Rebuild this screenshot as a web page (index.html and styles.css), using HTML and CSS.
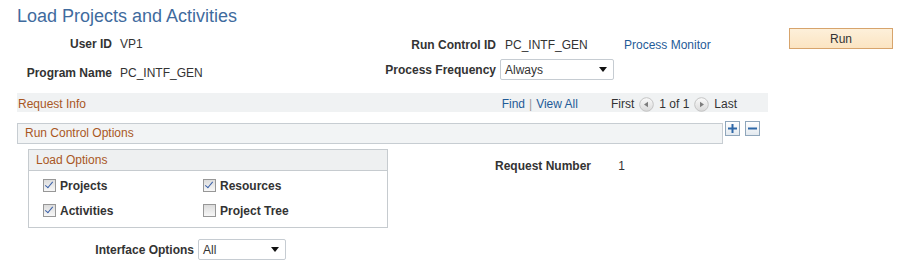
FILE: index.html
```html
<!DOCTYPE html>
<html>
<head>
    <title>Load Projects and Activities</title>
    <link rel="stylesheet" href="styles.css">
</head>
<body>
    <div class="page">
        <h1 class="page-title">Load Projects and Activities</h1>

        <div class="top">
            <div class="fields-left">
                <div class="left-row">
                    <span class="label label-left">User ID</span>
                    <span class="value">VP1</span>
                </div>
                <div class="left-row">
                    <span class="label label-left">Program Name</span>
                    <span class="value">PC_INTF_GEN</span>
                </div>
            </div>

            <div class="fields-right">
                <div class="right-row">
                    <span class="label label-right">Run Control ID</span>
                    <span class="value rc-value">PC_INTF_GEN</span>
                    <a class="link" href="#">Process Monitor</a>
                </div>
                <div class="right-row">
                    <span class="label label-right">Process Frequency</span>
                    <div class="select freq-select">
                        <span>Always</span>
                        <svg class="select-arrow" width="8" height="5" viewBox="0 0 8 5"><path d="M0 0 H8 L4 5 Z" fill="#111"/></svg>
                    </div>
                </div>
            </div>

            <button class="run-btn">Run</button>
        </div>

        <!-- scroll area header -->
        <div class="request-bar">
            <span class="section-title">Request Info</span>
            <div class="nav">
                <a class="link" href="#">Find</a>
                <span class="sep">|</span>
                <a class="link" href="#">View All</a>
                <span class="nav-first">First</span>
                <svg class="nav-icon" width="15" height="15" viewBox="0 0 15 15">
                    <defs>
                        <linearGradient id="navGrad" x1="0" y1="0" x2="0" y2="1">
                            <stop offset="0" stop-color="#fbfbfb"/>
                            <stop offset="1" stop-color="#d9d9d9"/>
                        </linearGradient>
                    </defs>
                    <circle cx="7.5" cy="7.5" r="6.8" fill="url(#navGrad)" stroke="#c4c4c4"/>
                    <path d="M5 7.5 L9 4.8 V10.2 Z" fill="#7d7d7d"/>
                </svg>
                <span class="nav-count">1 of 1</span>
                <svg class="nav-icon" width="15" height="15" viewBox="0 0 15 15">
                    <circle cx="7.5" cy="7.5" r="6.8" fill="url(#navGrad)" stroke="#c4c4c4"/>
                    <path d="M10 7.5 L6 4.8 V10.2 Z" fill="#7d7d7d"/>
                </svg>
                <span class="nav-last">Last</span>
            </div>
        </div>

        <div class="rco-row">
            <div class="rco-box"><span class="section-title">Run Control Options</span></div>
            <span class="row-btn">
                <svg width="9" height="9" viewBox="0 0 9 9"><path d="M3.5 0 H5.5 V3.5 H9 V5.5 H5.5 V9 H3.5 V5.5 H0 V3.5 H3.5 Z" fill="#2f68a8"/></svg>
            </span>
            <span class="row-btn row-btn-minus">
                <svg width="9" height="9" viewBox="0 0 9 9"><path d="M0 3.5 H9 V5.5 H0 Z" fill="#2f68a8"/></svg>
            </span>
        </div>

        <div class="load-row">
            <div class="load-group">
                <div class="group-header"><span class="section-title">Load Options</span></div>
                <div class="load-body">
                    <label class="check"><span class="box checked"></span>Projects</label>
                    <label class="check"><span class="box checked"></span>Resources</label>
                    <label class="check"><span class="box checked"></span>Activities</label>
                    <label class="check"><span class="box"></span>Project Tree</label>
                </div>
            </div>
            <div class="request-number">
                <span class="label rn-label">Request Number</span>
                <span class="value">1</span>
            </div>
        </div>

        <div class="interface-row">
            <span class="label label-interface">Interface Options</span>
            <div class="select interface-select">
                <span>All</span>
                <svg class="select-arrow" width="8" height="5" viewBox="0 0 8 5"><path d="M0 0 H8 L4 5 Z" fill="#111"/></svg>
            </div>
        </div>
    </div>
</body>
</html>
```

FILE: styles.css
```css
body {
    margin: 0;
    font-family: "Liberation Sans", Arial, sans-serif;
    font-size: 12px;
    color: #333;
}
.page {
    padding: 0 20px 0 17px;
}
.page-title {
    margin: 0;
    padding-top: 5px;
    font-size: 18px;
    line-height: 22px;
    font-weight: normal;
    color: #3f6b9e;
}
.label {
    font-weight: bold;
    color: #333;
}
.value {
    color: #333;
}
.link {
    color: #1f5b98;
    text-decoration: none;
}

/* header fields */
.top {
    display: flex;
    align-items: flex-start;
}
.fields-left {
    width: 353px;
    padding-top: 2px;
}
.left-row {
    display: flex;
    align-items: center;
    height: 29px;
}
.label-left {
    width: 95px;
    text-align: right;
    margin-right: 8px;
}
.fields-right {
    padding-top: 5px;
}
.right-row {
    display: flex;
    align-items: center;
    height: 25px;
}
.label-right {
    width: 126px;
    text-align: right;
}
.rc-value {
    margin-left: 9px;
    width: 119px;
}
.select {
    display: flex;
    align-items: center;
    justify-content: space-between;
    box-sizing: border-box;
    height: 21px;
    padding: 0 6px 0 4px;
    background: #fff;
    border: 1px solid #c6ccd2;
    border-radius: 2px;
    color: #333;
}
.freq-select {
    margin-left: 4px;
    width: 114px;
}
.run-btn {
    margin-left: auto;
    margin-top: 1px;
    width: 104px;
    height: 21px;
    padding: 0;
    font-family: inherit;
    font-size: 12px;
    color: #333;
    background: linear-gradient(#fdf0da, #fbe4c2);
    border: 1px solid #d7a46c;
    border-radius: 0;
}

/* request info bar */
.request-bar {
    display: flex;
    box-sizing: border-box;
    width: 751px;
    height: 19px;
    margin-top: 6px;
    padding: 3px 31px 0 1px;
    line-height: 16px;
    background: #f0f2f3;
}
.section-title {
    color: #a9571f;
}
.nav {
    display: flex;
    align-items: center;
    margin-left: auto;
    height: 16px;
}
.sep {
    margin: 0 4px;
    color: #999;
}
.nav-first {
    margin-left: 33px;
}
.nav-icon {
    margin: 0 5px 0 5px;
}

/* run control options */
.rco-row {
    display: flex;
    align-items: flex-start;
    margin-top: 11px;
}
.rco-box {
    box-sizing: border-box;
    width: 706px;
    height: 21px;
    padding-left: 7px;
    line-height: 19px;
    background: #f2f4f5;
    border: 1px solid #c7cdd2;
}
.row-btn {
    display: flex;
    align-items: center;
    justify-content: center;
    box-sizing: border-box;
    width: 15px;
    height: 15px;
    margin-top: -2px;
    margin-left: 2px;
    background: linear-gradient(#ffffff, #e3e9ef);
    border: 1px solid #8fa6bb;
}
.row-btn-minus {
    margin-left: 5px;
}

/* load options */
.load-row {
    display: flex;
    align-items: flex-start;
    margin-top: 5px;
}
.load-group {
    box-sizing: border-box;
    width: 360px;
    height: 79px;
    margin-left: 11px;
    border: 1px solid #c6cbcf;
}
.group-header {
    box-sizing: border-box;
    height: 21px;
    padding-left: 7px;
    line-height: 20px;
    background: #eef0f1;
    border-bottom: 1px solid #c6cbcf;
}
.load-body {
    display: grid;
    grid-template-columns: 160px 160px;
    grid-auto-rows: 25px;
    padding: 2px 0 0 14px;
}
.check {
    display: flex;
    align-items: center;
    font-weight: bold;
    color: #333;
}
.box {
    position: relative;
    box-sizing: border-box;
    width: 13px;
    height: 13px;
    margin-right: 4px;
    background: linear-gradient(#dcdcdc, #f7f7f7);
    border: 1px solid #979797;
}
.box.checked::after {
    content: "";
    position: absolute;
    left: 3px;
    top: 0px;
    width: 3px;
    height: 7px;
    border: solid #3a60a8;
    border-width: 0 1.5px 1.5px 0;
    transform: rotate(40deg);
}
.request-number {
    margin-left: 107px;
    padding-top: 7px;
    line-height: 20px;
}
.rn-label {
    display: inline-block;
    width: 120px;
}

/* interface options */
.interface-row {
    display: flex;
    align-items: center;
    margin-top: 11px;
}
.label-interface {
    width: 177px;
    text-align: right;
}
.interface-select {
    margin-left: 4px;
    width: 88px;
    height: 21px;
}
```
